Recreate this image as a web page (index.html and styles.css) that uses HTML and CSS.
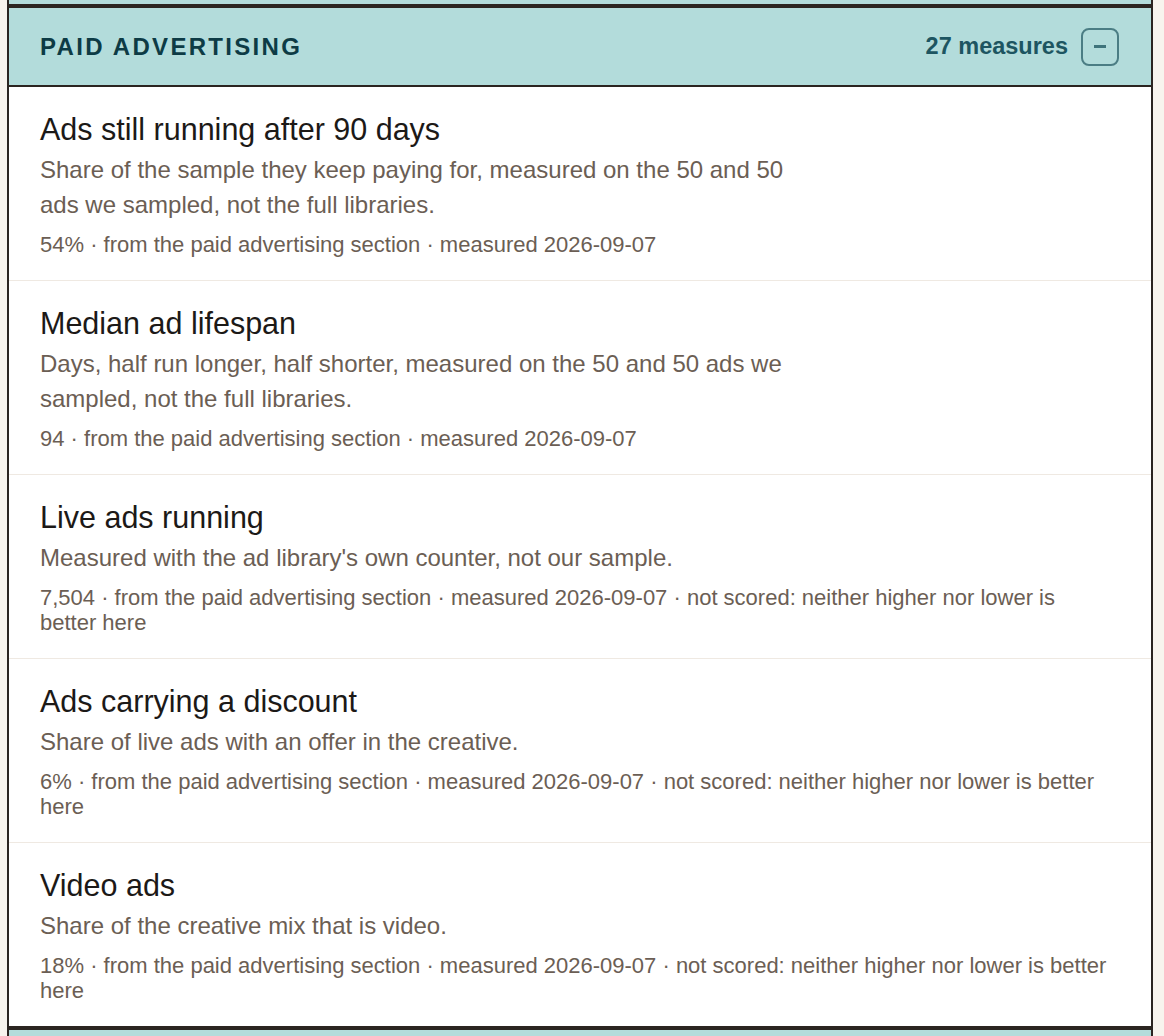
FILE: index.html
```html
<!DOCTYPE html>
<html lang="en">
<head>
<meta charset="utf-8">
<title>Paid advertising</title>
<link rel="stylesheet" href="styles.css">
</head>
<body>
<div class="page">
  <section class="section section--prev">
    <div class="section-head section-head--stub"></div>
  </section>
  <section class="section">
    <header class="section-head">
      <h2 class="section-title">PAID ADVERTISING</h2>
      <div class="section-side">
        <span class="section-count">27 measures</span>
        <button class="toggle" aria-label="Collapse"><span class="toggle-bar"></span></button>
      </div>
    </header>
    <ul class="measures">
      <li class="measure">
        <h3 class="measure-title">Ads still running after 90 days</h3>
        <p class="measure-desc">Share of the sample they keep paying for, measured on the 50 and 50 ads we sampled, not the full libraries.</p>
        <p class="measure-meta">54% · from the paid advertising section · measured 2026-09-07</p>
      </li>
      <li class="measure">
        <h3 class="measure-title">Median ad lifespan</h3>
        <p class="measure-desc">Days, half run longer, half shorter, measured on the 50 and 50 ads we sampled, not the full libraries.</p>
        <p class="measure-meta">94 · from the paid advertising section · measured 2026-09-07</p>
      </li>
      <li class="measure">
        <h3 class="measure-title">Live ads running</h3>
        <p class="measure-desc">Measured with the ad library's own counter, not our sample.</p>
        <p class="measure-meta">7,504 · from the paid advertising section · measured 2026-09-07 · not scored: neither higher nor lower is better here</p>
      </li>
      <li class="measure">
        <h3 class="measure-title">Ads carrying a discount</h3>
        <p class="measure-desc">Share of live ads with an offer in the creative.</p>
        <p class="measure-meta">6% · from the paid advertising section · measured 2026-09-07 · not scored: neither higher nor lower is better here</p>
      </li>
      <li class="measure">
        <h3 class="measure-title">Video ads</h3>
        <p class="measure-desc">Share of the creative mix that is video.</p>
        <p class="measure-meta">18% · from the paid advertising section · measured 2026-09-07 · not scored: neither higher nor lower is better here</p>
      </li>
    </ul>
  </section>
  <section class="section section--next">
    <div class="section-head section-head--stub"></div>
  </section>
</div>
</body>
</html>
```

FILE: styles.css
```css
html, body {
  margin: 0;
  padding: 0;
  background: #f8f4ee;
  font-family: "Liberation Sans", Arial, Helvetica, sans-serif;
  overflow: hidden;
}

.page {
  width: 1146px;
  margin-left: 7px;
  margin-top: -77px;
}

.section {
  border: 2px solid #2b2521;
  background: #ffffff;
}

.section-head {
  background: #b3dcdb;
  height: 77px;
  padding: 0 32px 0 31px;
  display: flex;
  align-items: center;
  justify-content: space-between;
  border-bottom: 2px solid #2b2521;
}

.section--prev .section-head {
  border-bottom: 0;
  height: 79px;
}

.section--next .section-head {
  border-bottom: 0;
}

.section-title {
  margin: 0;
  font-size: 24px;
  font-weight: 700;
  letter-spacing: 2.3px;
  color: #0d3b45;
}

.section-side {
  display: flex;
  align-items: center;
  gap: 13px;
}

.section-count {
  font-size: 23.5px;
  font-weight: 700;
  color: #1d5561;
}

.toggle {
  width: 38px;
  height: 38px;
  padding: 0;
  border: 2px solid #4b7d84;
  border-radius: 8px;
  background: transparent;
  display: flex;
  align-items: center;
  justify-content: center;
}

.toggle-bar {
  width: 12px;
  height: 3px;
  background: #3f747b;
}

.measures {
  list-style: none;
  margin: 0;
  padding: 0;
}

.measure {
  padding: 23px 32px 23px 31px;
  border-bottom: 1px solid #efe9e2;
}

.measure:last-child {
  border-bottom: 0;
}

.measure-title {
  margin: 0 0 4px;
  font-size: 30.5px;
  font-weight: 400;
  line-height: 38px;
  color: #1c1917;
}

.measure-desc {
  margin: 0 0 10px;
  max-width: 770px;
  font-size: 24px;
  line-height: 35px;
  color: #6b5e54;
}

.measure-meta {
  margin: 0;
  max-width: 1072px;
  font-size: 22px;
  line-height: 25px;
  color: #6b5e54;
}
```
